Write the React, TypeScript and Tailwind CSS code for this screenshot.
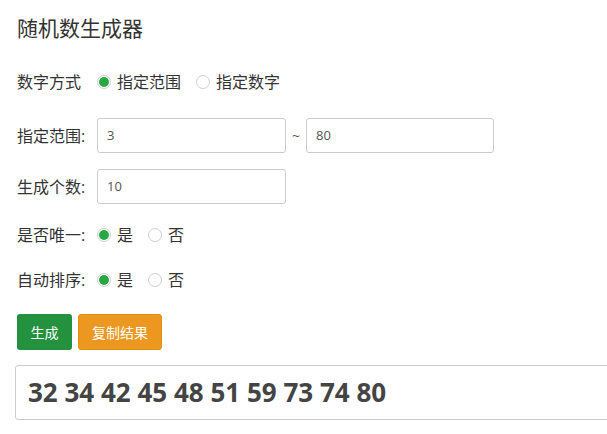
const font = { fontFamily: '"Open Sans", "Noto Sans CJK SC", sans-serif' };

function Radio({ checked, label, className = "" }: { checked?: boolean; label: string; className?: string }) {
  return (
    <label className={`flex items-center gap-[6px] ${className}`}>
      <span className="flex h-[14px] w-[14px] items-center justify-center rounded-full border border-[#cfcfcf] bg-white">
        {checked && <span className="h-[10px] w-[10px] rounded-full bg-[#28a745]" />}
      </span>
      <span>{label}</span>
    </label>
  );
}

function Field({ value, className = "" }: { value: string; className?: string }) {
  return (
    <div className={`flex h-[35px] items-center rounded-[3px] border border-[#ccc] bg-white px-[9px] text-[13px] text-[#555] ${className}`}>
      {value}
    </div>
  );
}

export default function App() {
  return (
    <div className="h-[434px] w-[607px] overflow-hidden bg-white text-[16px] text-[#333]" style={font}>
      <div className="pl-[17px] pt-[14px]">
        <h1 className="text-[21px] leading-[28px] text-[#333]">随机数生成器</h1>

        <div className="mt-[28px] flex h-[24px] items-center">
          <span className="w-[80px]">数字方式</span>
          <Radio checked label="指定范围" />
          <Radio label="指定数字" className="ml-[15px]" />
        </div>

        <div className="mt-[24px] flex items-center">
          <span className="w-[80px]">指定范围:</span>
          <Field value="3" className="w-[189px]" />
          <span className="mx-[6px] text-[14px] text-[#555]">~</span>
          <Field value="80" className="w-[188px]" />
        </div>

        <div className="mt-[16px] flex items-center">
          <span className="w-[80px]">生成个数:</span>
          <Field value="10" className="w-[189px]" />
        </div>

        <div className="mt-[19px] flex h-[24px] items-center">
          <span className="w-[80px]">是否唯一:</span>
          <Radio checked label="是" />
          <Radio label="否" className="ml-[15px]" />
        </div>

        <div className="mt-[21px] flex h-[24px] items-center">
          <span className="w-[80px]">自动排序:</span>
          <Radio checked label="是" />
          <Radio label="否" className="ml-[15px]" />
        </div>

        <div className="mt-[22px] flex gap-[6px]">
          <button className="h-[36px] w-[55px] rounded-[3px] bg-[#24913f] text-[14px] text-white">生成</button>
          <button className="h-[36px] w-[84px] rounded-[3px] border border-[#e08e0b] bg-[#ec971f] text-[14px] text-white">复制结果</button>
        </div>
      </div>

      <div className="ml-[15px] mt-[15px] flex h-[55px] w-[620px] items-center rounded-[3px] border border-[#ccc] px-[12px] text-[26px] font-bold text-[#444]">
        32 34 42 45 48 51 59 73 74 80
      </div>
    </div>
  );
}
